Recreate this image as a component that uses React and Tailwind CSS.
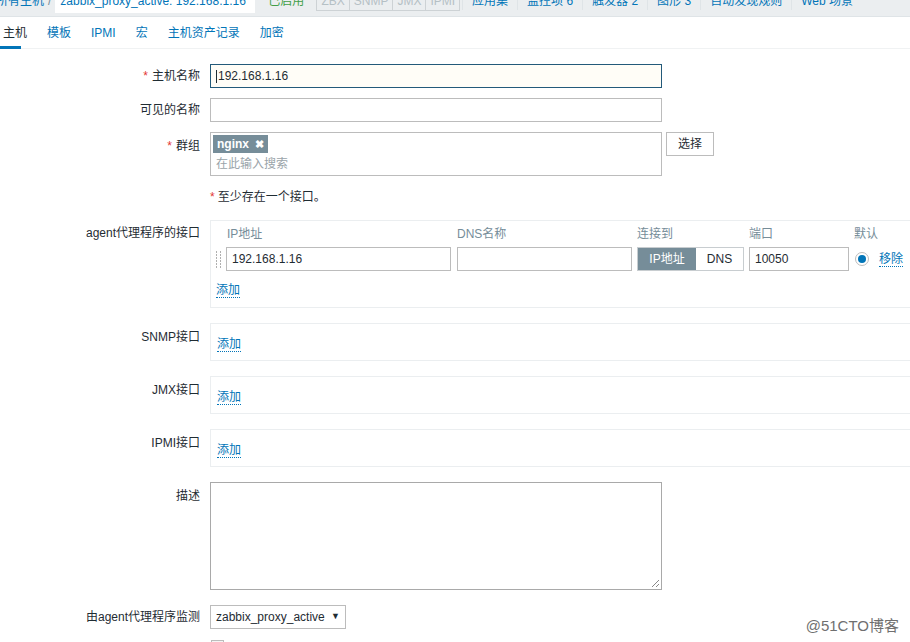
const FONT = { fontFamily: '"Liberation Sans", Arial, "Noto Sans CJK SC", sans-serif' };

function Label({ children, req, className = '' }) {
  return (
    <div className={`w-[200px] shrink-0 text-right text-[12px] text-[#1f2c33] ${className}`}>
      {req && <span className="text-[#e33734] mr-[4px]">*</span>}
      {children}
    </div>
  );
}

function AddLink() {
  return (
    <span className="text-[12px] text-[#0275b8] border-b border-dotted border-[#0275b8] leading-[14px]">添加</span>
  );
}

function EmptyIface({ label }) {
  return (
    <div className="flex mt-[15px]">
      <Label className="pt-[5px]">{label}</Label>
      <div className="ml-[10px] flex-1 h-[38px] border border-[#ebeef0] border-r-0 pl-[6px] pt-[7px]">
        <AddLink />
      </div>
    </div>
  );
}

export default function App() {
  const topLinks = ['应用集', '监控项 6', '触发器 2', '图形 3', '自动发现规则', 'Web 场景'];
  const tabs = ['主机', '模板', 'IPMI', '宏', '主机资产记录', '加密'];

  return (
    <div className="relative w-[910px] h-[642px] overflow-hidden bg-white" style={FONT}>
      {/* breadcrumb bar, clipped at the top */}
      <div className="h-[17px] bg-[#ebeef0] border-b border-[#dfe4e7] overflow-hidden">
        <div className="flex items-center h-[26px] -mt-[12px] text-[12px] whitespace-nowrap">
          <span className="text-[#0275b8] -ml-[4px]">所有主机</span>
          <span className="text-[#768d99] mx-[4px]">/</span>
          <span className="bg-white px-[5px] h-[24px] leading-[24px] text-[#0275b8] w-[200px] overflow-hidden">zabbix_proxy_active: 192.168.1.16</span>
          <span className="text-[#429e47] ml-[13px]">已启用</span>
          <div className="flex ml-[12px] border border-[#cdd2d5] text-[#b5c0c5]">
            <span className="px-[4px] border-r border-[#cdd2d5]">ZBX</span>
            <span className="px-[4px] border-r border-[#cdd2d5]">SNMP</span>
            <span className="px-[4px] border-r border-[#cdd2d5]">JMX</span>
            <span className="px-[4px]">IPMI</span>
          </div>
          <div className="flex ml-[2px]">
            {topLinks.map((t) => (
              <span key={t} className="text-[#0275b8] px-[9px] border-l border-[#dfe4e7]">{t}</span>
            ))}
          </div>
        </div>
      </div>

      {/* tabs */}
      <div className="flex h-[32px] border-b border-[#f0f2f3] text-[12px] relative">
        <div className="flex gap-[20px] ml-[3px] items-center">
          {tabs.map((t, i) => (
            <span key={t} className={i === 0 ? 'text-[#1f2c33]' : 'text-[#0275b8]'}>{t}</span>
          ))}
        </div>
        <div className="absolute left-0 bottom-[-1px] w-[21px] h-[3px] bg-[#0275b8]" />
      </div>

      {/* form */}
      <div className="pt-[15px]">
        <div className="flex items-center">
          <Label req>主机名称</Label>
          <div className="ml-[10px] w-[452px] h-[24px] border border-[#235a7a] bg-[#fffdf7] flex items-center px-[5px] text-[12px] text-[#1f2c33]">
            <span className="w-px h-[13px] bg-[#1f2c33] mr-[1px]" />192.168.1.16
          </div>
        </div>

        <div className="flex items-center mt-[10px]">
          <Label>可见的名称</Label>
          <div className="ml-[10px] w-[452px] h-[24px] border border-[#bcbcbc]" />
        </div>

        <div className="flex mt-[10px]">
          <Label req className="pt-[5px]">群组</Label>
          <div className="ml-[10px] w-[452px] h-[44px] border border-[#bcbcbc] px-[2px] pt-[2px] flex flex-col items-start">
            <span className="flex items-center h-[18px] px-[4px] bg-[#768d99] text-white text-[12px] font-bold leading-[18px]">
              nginx<span className="ml-[6px] text-[11px]">✖</span>
            </span>
            <div className="text-[12px] leading-[18px] text-[#9aa4a9] pl-[3px] mt-[2px]">在此输入搜索</div>
          </div>
          <button className="ml-[4px] w-[48px] h-[24px] border border-[#bcbcbc] bg-white text-[12px] text-[#1f2c33]">选择</button>
        </div>

        <div className="flex mt-[12px] h-[18px] items-center">
          <div className="w-[200px]" />
          <div className="ml-[10px] text-[12px] text-[#1f2c33]">
            <span className="text-[#e33734] mr-[3px]">*</span>至少存在一个接口。
          </div>
        </div>

        {/* agent interface */}
        <div className="flex mt-[14px]">
          <Label className="pt-[4px]">agent代理程序的接口</Label>
          <div className="ml-[10px] flex-1 h-[88px] border border-[#ebeef0] border-r-0 pl-[5px] pt-[5px]">
            <div className="flex text-[12px] text-[#768d99] h-[16px] items-center">
              <span className="ml-[11px] w-[230px]">IP地址</span>
              <span className="w-[180px]">DNS名称</span>
              <span className="w-[112px]">连接到</span>
              <span className="w-[105px]">端口</span>
              <span>默认</span>
            </div>
            <div className="flex items-center mt-[5px] text-[12px] text-[#1f2c33]">
              <div className="w-[6px] h-[20px] grid grid-cols-2 gap-x-[2px] gap-y-[1px] content-center">
                {Array.from({ length: 12 }).map((_, i) => (
                  <span key={i} className="w-[1px] h-[2px] bg-[#b0b0b0]" />
                ))}
              </div>
              <div className="ml-[4px] w-[225px] h-[24px] border border-[#bcbcbc] px-[5px] flex items-center">192.168.1.16</div>
              <div className="ml-[6px] w-[175px] h-[24px] border border-[#bcbcbc]" />
              <div className="ml-[5px] flex h-[24px] border border-[#c8cdd0]">
                <span className="w-[58px] bg-[#768d99] text-white flex items-center justify-center">IP地址</span>
                <span className="w-[47px] bg-white flex items-center justify-center">DNS</span>
              </div>
              <div className="ml-[5px] w-[100px] h-[24px] border border-[#bcbcbc] px-[5px] flex items-center">10050</div>
              <span className="ml-[6px] w-[14px] h-[14px] rounded-full border border-[#bcbcbc] flex items-center justify-center">
                <span className="w-[8px] h-[8px] rounded-full bg-[#0275b8]" />
              </span>
              <span className="ml-[10px] text-[#0275b8] border-b border-dotted border-[#0275b8] leading-[14px]">移除</span>
            </div>
            <div className="mt-[6px]">
              <AddLink />
            </div>
          </div>
        </div>

        <EmptyIface label="SNMP接口" />
        <EmptyIface label="JMX接口" />
        <EmptyIface label="IPMI接口" />

        <div className="flex mt-[15px]">
          <Label className="pt-[5px]">描述</Label>
          <div className="ml-[10px] w-[452px] h-[108px] border border-[#a9a9a9] relative">
            <svg className="absolute right-[1px] bottom-[1px]" width="10" height="10" viewBox="0 0 10 10">
              <path d="M9 2 L2 9 M9 6 L6 9" stroke="#888" strokeWidth="1" />
            </svg>
          </div>
        </div>

        <div className="flex items-center mt-[15px]">
          <Label>由agent代理程序监测</Label>
          <div className="ml-[10px] w-[136px] h-[24px] border border-[#bcbcbc] flex items-center justify-between px-[5px] text-[12px] text-[#1f2c33]">
            <span>zabbix_proxy_active</span>
            <span className="text-[9px]">▼</span>
          </div>
        </div>

        <div className="flex mt-[11px]">
          <div className="w-[200px]" />
          <span className="ml-[11px] w-[13px] h-[13px] border border-[#bcbcbc] bg-[#f4f4f4]" />
        </div>
      </div>

      <div className="absolute right-[11px] top-[615px] text-[15px] text-[#6f6f6f]" style={{ textShadow: '0 0 2px #fff' }}>
        @51CTO博客
      </div>
    </div>
  );
}
